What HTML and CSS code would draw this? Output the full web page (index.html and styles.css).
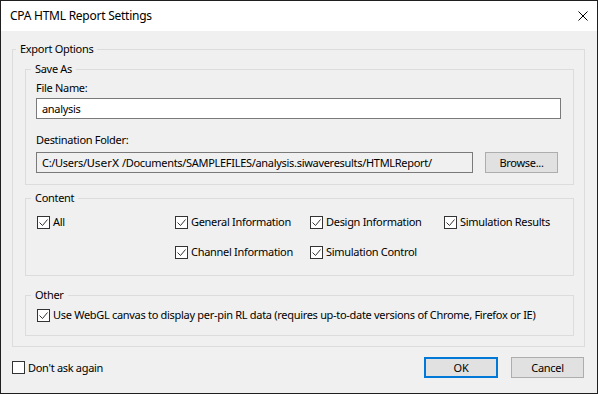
FILE: index.html
```html
<!DOCTYPE html>
<html>
<head>
<meta charset="utf-8">
<link rel="stylesheet" href="styles.css">
</head>
<body>
<div class="window">
  <div class="titlebar">
    <span class="title">CPA HTML Report Settings</span>
    <svg class="close" width="10" height="10" viewBox="0 0 10 10"><path d="M0.5 0.5L9.5 9.5M9.5 0.5L0.5 9.5" stroke="#000" stroke-width="1" fill="none"/></svg>
  </div>
  <div class="client">
    <fieldset class="group export">
      <legend>Export Options</legend>
      <fieldset class="group saveas">
        <legend>Save As</legend>
        <div class="label">File Name:</div>
        <div class="input file">analysis</div>
        <div class="label dest-label">Destination Folder:</div>
        <div class="dest-row">
          <div class="input dest">C:/Users/<span class="anon">UserX</span> /Documents/SAMPLEFILES/analysis.siwaveresults/HTMLReport/</div>
          <div class="button browse">Browse...</div>
        </div>
      </fieldset>
      <fieldset class="group content">
        <legend>Content</legend>
        <div class="check-grid">
          <div class="check"><svg class="box" width="13" height="13" viewBox="0 0 13 13"><rect x="0.5" y="0.5" width="12" height="12" fill="#fff" stroke="#333"/><polyline points="2.5,6.5 5.5,9.5 10.5,3.5" fill="none" stroke="#333"/></svg><span>All</span></div>
          <div class="check"><svg class="box" width="13" height="13" viewBox="0 0 13 13"><rect x="0.5" y="0.5" width="12" height="12" fill="#fff" stroke="#333"/><polyline points="2.5,6.5 5.5,9.5 10.5,3.5" fill="none" stroke="#333"/></svg><span>General Information</span></div>
          <div class="check"><svg class="box" width="13" height="13" viewBox="0 0 13 13"><rect x="0.5" y="0.5" width="12" height="12" fill="#fff" stroke="#333"/><polyline points="2.5,6.5 5.5,9.5 10.5,3.5" fill="none" stroke="#333"/></svg><span>Design Information</span></div>
          <div class="check"><svg class="box" width="13" height="13" viewBox="0 0 13 13"><rect x="0.5" y="0.5" width="12" height="12" fill="#fff" stroke="#333"/><polyline points="2.5,6.5 5.5,9.5 10.5,3.5" fill="none" stroke="#333"/></svg><span>Simulation Results</span></div>
          <div class="check col2"><svg class="box" width="13" height="13" viewBox="0 0 13 13"><rect x="0.5" y="0.5" width="12" height="12" fill="#fff" stroke="#333"/><polyline points="2.5,6.5 5.5,9.5 10.5,3.5" fill="none" stroke="#333"/></svg><span>Channel Information</span></div>
          <div class="check"><svg class="box" width="13" height="13" viewBox="0 0 13 13"><rect x="0.5" y="0.5" width="12" height="12" fill="#fff" stroke="#333"/><polyline points="2.5,6.5 5.5,9.5 10.5,3.5" fill="none" stroke="#333"/></svg><span>Simulation Control</span></div>
        </div>
      </fieldset>
      <fieldset class="group other">
        <legend>Other</legend>
        <div class="check"><svg class="box" width="13" height="13" viewBox="0 0 13 13"><rect x="0.5" y="0.5" width="12" height="12" fill="#fff" stroke="#333"/><polyline points="2.5,6.5 5.5,9.5 10.5,3.5" fill="none" stroke="#333"/></svg><span>Use WebGL canvas to display per-pin RL data (requires up-to-date versions of Chrome, Firefox or IE)</span></div>
      </fieldset>
    </fieldset>
    <div class="footer">
      <div class="check"><svg class="box" width="13" height="13" viewBox="0 0 13 13"><rect x="0.5" y="0.5" width="12" height="12" fill="#fff" stroke="#333"/></svg><span>Don't ask again</span></div>
      <div class="buttons">
        <div class="button ok">OK</div>
        <div class="button cancel">Cancel</div>
      </div>
    </div>
  </div>
</div>
</body>
</html>
```

FILE: styles.css
```css
html, body {
  margin: 0;
  padding: 0;
}
body {
  font-family: "Noto Sans", "Open Sans", sans-serif;
  font-size: 11px;
  letter-spacing: -0.3px;
  line-height: 16px;
  color: #000;
  background: #f0f0f0;
}
.window {
  width: 596px;
  height: 392px;
  border: 1px solid #1f1f1f;
  background: #f0f0f0;
  display: flex;
  flex-direction: column;
}
.titlebar {
  height: 30px;
  background: #fff;
  display: flex;
  align-items: center;
  justify-content: space-between;
  padding: 0 9px 0 9px;
}
.title {
  font-size: 12px;
  letter-spacing: -0.25px;
}
.close {
  display: block;
}
.client {
  padding: 10px 12px 0 11px;
}
.group {
  margin: 0;
  min-width: 0;
  border: 1px solid #dcdcdc;
}
.group legend {
  padding: 0 4px;
  line-height: 16px;
}
.export {
  padding: 4px 10px 10px 12px;
}
.export > legend {
  margin-left: -9px;
}
.saveas {
  padding: 3px 12px 11px 10px;
}
.saveas > legend {
  margin-left: -5px;
}
.label {
  height: 16px;
}
.input {
  box-sizing: border-box;
  height: 21px;
  border: 1px solid #7a7a7a;
  padding: 0 5px;
  line-height: 19px;
  white-space: nowrap;
  overflow: hidden;
}
.file {
  margin-top: 2px;
  background: #fff;
}
.dest-label {
  margin-top: 13px;
}
.dest-row {
  margin-top: 4px;
  display: flex;
}
.dest {
  width: 437px;
  background: #f0f0f0;
}
.anon {
  font-family: "DejaVu Sans", sans-serif;
  font-size: 11px;
  letter-spacing: 0;
}
.button {
  box-sizing: border-box;
  height: 21px;
  background: #e1e1e1;
  border: 1px solid #adadad;
  text-align: center;
  line-height: 19px;
}
.browse {
  width: 73px;
  margin-left: 12px;
}
.content {
  margin-top: 5px;
  padding: 8px 10px 15px 11px;
}
.content > legend, .other > legend {
  margin-left: -6px;
}
.check-grid {
  display: grid;
  grid-template-columns: 138px 135px 134px auto;
  row-gap: 14px;
}
.col2 {
  grid-column: 2;
}
.check {
  display: flex;
  align-items: center;
  height: 16px;
  white-space: nowrap;
}
.box {
  display: block;
  flex: none;
  margin-right: 3px;
}
.other {
  margin-top: 11px;
  padding: 4px 10px 12px 11px;
}
.footer {
  margin-top: 10px;
  display: flex;
  align-items: center;
  justify-content: space-between;
  padding-right: 1px;
}
.buttons {
  display: flex;
}
.ok {
  width: 74px;
  border: 2px solid #0078d7;
  line-height: 17px;
}
.cancel {
  width: 73px;
  margin-left: 13px;
}
```
